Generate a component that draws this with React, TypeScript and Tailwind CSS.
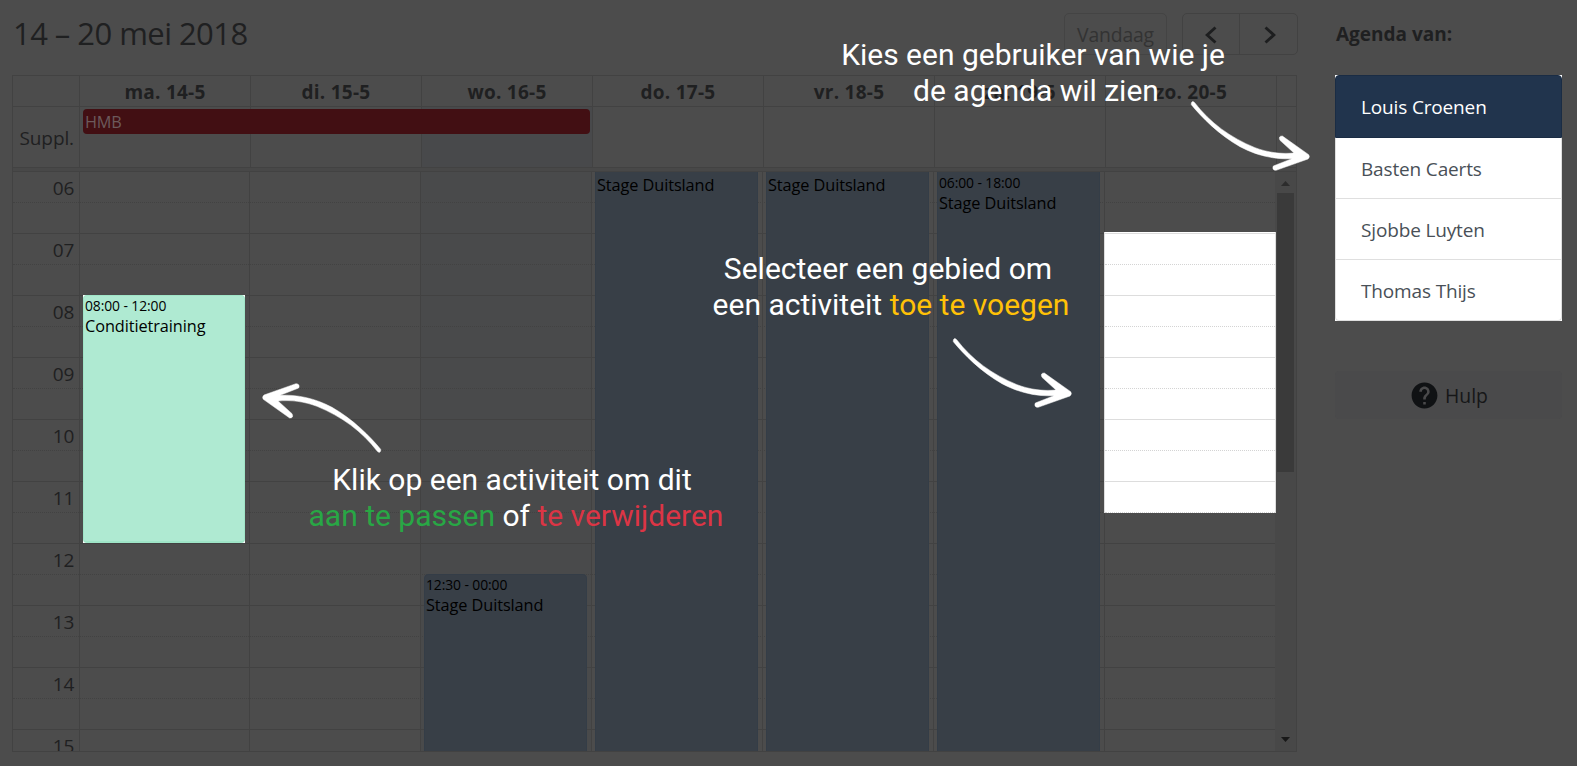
import React from "react";
import { MdHelp } from "react-icons/md";

const days = ["ma. 14-5", "di. 15-5", "wo. 16-5", "do. 17-5", "vr. 18-5", "za. 19-5", "zo. 20-5"];
const hours = ["06", "07", "08", "09", "10", "11", "12", "13", "14", "15"];
const users = ["Basten Caerts", "Sjobbe Luyten", "Thomas Thijs"];

function Arrow({ className }: { className: string }) {
  return (
    <svg className={`absolute h-[72px] w-[120px] ${className}`} viewBox="90 300 360 216" fill="#fff">
      <path
        stroke="#fff"
        strokeWidth="1.5"
        d="M94 309 Q97 301 104 308 C150 368 210 412 285 443 C322 457 362 463 402 459 L360 421 Q354 408 367 408 L446 464 Q451 471 444 477 L348 511 Q335 510 340 498 L396 476 C345 479 290 467 240 440 C178 405 125 352 94 314 Z"
      />
    </svg>
  );
}

function CalendarEvent({ className, time, title }: { className: string; time?: string; title: string }) {
  return (
    <div className={`absolute border px-[1px] text-black ${className}`}>
      {time && <div className="h-[20px] text-[13.9px] leading-[20px] tracking-[-0.1px]">{time}</div>}
      <div className={`text-[16.3px] tracking-[-0.08px] ${time ? "leading-[21px]" : "leading-[27px]"}`}>{title}</div>
    </div>
  );
}

function Toolbar() {
  return (
    <div className="flex h-[75px] w-[1286px] items-start justify-between pt-[13px]">
      <h2 className="pl-[1px] text-[31px] leading-[41px] tracking-[-0.55px]">14 – 20 mei 2018</h2>
      <div className="flex gap-[15px]">
        <button className="h-[42px] w-[103px] rounded-[5px] border border-[#444444] pt-[2px] text-[19.4px] tracking-[-0.2px] text-[#333333]">
          Vandaag
        </button>
        <div className="flex h-[42px] w-[116px] rounded-[5px] border border-[#424242]">
          <button className="flex w-[57px] items-center justify-center border-r border-[#424242] pt-[1px]">
            <svg width="12" height="18" viewBox="0 0 12 18" fill="none" stroke="#1d1e1f" strokeWidth="2.9">
              <path d="M10.5 1.5 L2.2 9 L10.5 16.5" />
            </svg>
          </button>
          <button className="flex flex-1 items-center justify-center pl-[3px] pt-[1px]">
            <svg width="12" height="18" viewBox="0 0 12 18" fill="none" stroke="#1d1e1f" strokeWidth="2.9">
              <path d="M1.5 1.5 L9.8 9 L1.5 16.5" />
            </svg>
          </button>
        </div>
      </div>
    </div>
  );
}

function HeaderRows() {
  return (
    <>
      <div className="grid h-[31px] grid-cols-[66px_repeat(7,171px)_1fr] border-b border-[#424242]">
        <div />
        {days.map((d) => (
          <div key={d} className="border-l border-[#424242] text-center text-[19px] font-bold leading-[32px] tracking-[0.25px]">
            {d}
          </div>
        ))}
        <div className="border-l border-[#424242]" />
      </div>
      <div className="relative grid h-[61px] grid-cols-[66px_repeat(7,171px)_1fr] border-b border-[#424242]">
        <div className="flex items-center justify-end pr-[5px] pt-[2px] text-[19px] tracking-[-0.1px]">Suppl.</div>
        {days.map((d, i) => (
          <div key={d} className={`border-l border-[#424242] ${i === 2 ? "bg-[#48494b]" : ""}`} />
        ))}
        <div className="border-l border-[#424242]" />
        <div className="absolute left-[70px] top-[2px] h-[25px] w-[507px] rounded-[4px] bg-[#420f13] pl-[2px] text-[16.3px] leading-[26px] tracking-[-0.2px] text-[#6c5a5c]">
          HMB
        </div>
      </div>
    </>
  );
}

function TimeGrid() {
  return (
    <div className="flex h-[579px] overflow-hidden">
      <div className="relative h-full w-[1262px]">
        <div className="absolute inset-0 grid grid-cols-[66px_170px_repeat(6,171px)]">
          <div />
          {days.map((d, i) => (
            <div key={d} className={`border-l border-[#424242] ${i === 2 ? "bg-[#494a4b]" : ""}`} />
          ))}
        </div>
        <div className="relative">
          {hours.map((h, i) => (
            <div key={h} className={i === 0 ? "h-[61px]" : "h-[62px] border-t border-[#424242]"}>
              <div className="h-[31px] border-b border-dotted border-[#424242]">
                <div className="w-[61px] text-right text-[19px] leading-[33px] tracking-[-0.3px]">{h}</div>
              </div>
            </div>
          ))}
        </div>
        <CalendarEvent
          className="left-[411px] top-[402px] h-[190px] w-[163px] rounded-[4px] border-[#343d47] bg-[#383f47]"
          time="12:30 - 00:00"
          title="Stage Duitsland"
        />
        <CalendarEvent className="-top-[1px] left-[582px] h-[600px] w-[163px] border-[#343d47] bg-[#383f47]" title="Stage Duitsland" />
        <CalendarEvent className="-top-[1px] left-[753px] h-[600px] w-[163px] border-[#343d47] bg-[#383f47]" title="Stage Duitsland" />
        <CalendarEvent
          className="-top-[1px] left-[924px] h-[600px] w-[163px] border-[#343d47] bg-[#383f47] pt-[1px]"
          time="06:00 - 18:00"
          title="Stage Duitsland"
        />
        <div className="absolute left-[70px] top-[123px] h-[248px] w-[162px] bg-white">
          <CalendarEvent
            className="inset-0 rounded-[4px] border-b-2 border-[#9fe5c7] bg-[#afead2]"
            time="08:00 - 12:00"
            title="Conditietraining"
          />
        </div>
      </div>
      <div className="flex flex-1 flex-col items-center justify-between bg-[#484848]">
        <div className="flex w-full flex-col items-center">
          <svg className="mt-[9px] h-[5px] w-[9px]" viewBox="0 0 9 5" fill="#2c2c2c">
            <path d="M4.5 0 L9 5 H0 Z" />
          </svg>
          <div className="mr-[1px] mt-[7px] h-[279px] w-[17px] bg-[#3a3a3a]" />
        </div>
        <svg className="mb-[9px] h-[5px] w-[9px]" viewBox="0 0 9 5" fill="#181818">
          <path d="M4.5 5 L9 0 H0 Z" />
        </svg>
      </div>
    </div>
  );
}

function Sidebar() {
  return (
    <aside className="ml-[37px] w-[227px]">
      <h3 className="h-[75px] pl-[1px] pt-[14px] text-[19px] font-bold leading-[40px]">Agenda van:</h3>
      <div className="h-[246px] bg-white text-[19px] text-[#495057]">
        <div className="h-[63px] rounded-t-[4px] border border-[#1a2c44] bg-[#21344d] pl-[25px] leading-[63px] tracking-[-0.15px] text-white">
          Louis Croenen
        </div>
        <div className="rounded-b-[4px] border border-t-0 border-[#dfdfdf]">
          {users.map((u, i) => (
            <div
              key={u}
              className={`pl-[25px] leading-[62px] tracking-[-0.15px] ${i < 2 ? "h-[61px] border-b border-[#dfdfdf]" : "h-[60px]"}`}
            >
              {u}
            </div>
          ))}
        </div>
      </div>
      <button className="mt-[50px] flex h-[48px] w-full items-center justify-center gap-[5px] rounded-[4px] bg-[#4a4a4b] text-[19.4px] text-[#161718]">
        <MdHelp size={31} color="#101214" />
        <span className="pt-[2px]">Hulp</span>
      </button>
    </aside>
  );
}

function SelectedArea() {
  return (
    <div className="absolute left-[1104px] top-[232px] h-[281px] w-[172px] overflow-hidden border-x border-[#dddddd] bg-white pt-[1px]">
      {[0, 1, 2, 3, 4].map((n) => (
        <div key={n} className="h-[62px] border-t border-[#dddddd]">
          <div className="h-[31px] border-b border-dotted border-[#d4d4d4]" />
        </div>
      ))}
    </div>
  );
}

export default function App() {
  return (
    <div className="relative flex h-[766px] w-[1577px] overflow-hidden bg-[#4c4c4c] pl-[12px] font-['Open_Sans','Noto_Sans',sans-serif] text-[#1f2021]">
      <main className="w-[1286px]">
        <Toolbar />
        <div className="h-[677px] w-[1285px] border border-[#424242]">
          <HeaderRows />
          <div className="h-[4px] border-b border-[#424242] bg-[#484848]" />
          <TimeGrid />
        </div>
      </main>
      <Sidebar />
      <SelectedArea />
      <div className="pointer-events-none absolute inset-0 font-['Roboto',sans-serif] text-[30px] leading-[36px] text-white">
        <p className="absolute left-[783px] top-[37px] w-[500px] text-center">
          Kies een gebruiker van wie je
          <br />
          <span className="relative left-[3px]">de agenda wil zien</span>
        </p>
        <p className="absolute left-[641px] top-[251px] w-[500px] text-center">
          <span className="relative -left-[3px]">Selecteer een gebied om</span>
          <br />
          een activiteit <span className="text-[#ffc107]">toe te voegen</span>
        </p>
        <p className="absolute left-[266px] top-[462px] w-[500px] text-center">
          <span className="relative -left-[4px]">Klik op een activiteit om dit</span>
          <br />
          <span className="text-[#28a745]">aan te passen</span> of <span className="text-[#dc3545]">te verwijderen</span>
        </p>
        <Arrow className="left-[1190px] top-[100px]" />
        <Arrow className="left-[952px] top-[337px]" />
        <Arrow className="left-[262px] top-[382px] rotate-180" />
      </div>
    </div>
  );
}
